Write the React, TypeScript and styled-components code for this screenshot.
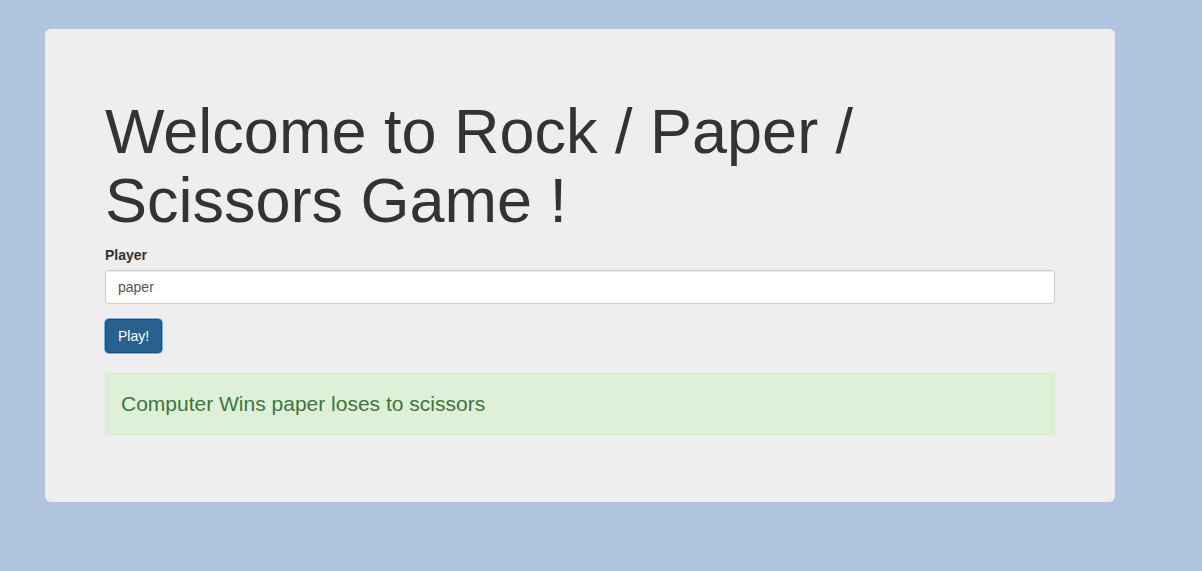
import React from "react";
import styled, { createGlobalStyle } from "styled-components";

const GlobalStyle = createGlobalStyle`
  html, body {
    margin: 0;
    padding: 0;
    background: #b0c4de;
    font-family: "Liberation Sans", Arial, Helvetica, sans-serif;
    font-size: 14px;
    line-height: 1.42857143;
    color: #333;
  }
  * { box-sizing: border-box; }
`;

const Page = styled.div`
  padding: 29px 0 0 45px;
`;

const Jumbotron = styled.div`
  width: 1070px;
  background: #eeeeee;
  border-radius: 6px;
  padding: 48px 60px;
  display: flex;
  flex-direction: column;
`;

const Title = styled.h1`
  margin: 20px 0 9px;
  font-size: 63px;
  line-height: 1.1;
  font-weight: 500;
  color: #333;
`;

const Label = styled.label`
  font-weight: bold;
  font-size: 14px;
  line-height: 20px;
  margin-bottom: 5px;
  color: #333;
`;

const Input = styled.input`
  display: block;
  width: 100%;
  height: 34px;
  padding: 6px 12px;
  font-family: inherit;
  font-size: 14px;
  color: #555;
  background: #fff;
  border: 1px solid #ccc;
  border-radius: 4px;
  box-shadow: inset 0 1px 1px rgba(0, 0, 0, 0.075);
  margin-bottom: 15px;
  outline: none;
`;

const Button = styled.button`
  align-self: flex-start;
  height: 34px;
  padding: 6px 12px;
  font-family: inherit;
  font-size: 14px;
  line-height: 20px;
  color: #fff;
  background: #286090;
  border: 1px solid #204d74;
  border-radius: 4px;
  box-shadow: 0 0 0 1px #7fb0e8;
  margin-bottom: 20px;
  cursor: pointer;
`;

const Alert = styled.p`
  margin: 0 0 19px;
  padding: 15px;
  border: 1px solid #d6e9c6;
  border-radius: 4px;
  background: #dff0d8;
  color: #3c763d;
  font-size: 21px;
  line-height: 30px;
  font-weight: 200;
`;

export default function App() {
  return (
    <>
      <GlobalStyle />
      <Page>
        <Jumbotron>
          <Title>Welcome to Rock / Paper / Scissors Game !</Title>
          <Label>Player</Label>
          <Input defaultValue="paper" />
          <Button>Play!</Button>
          <Alert>Computer Wins paper loses to scissors</Alert>
        </Jumbotron>
      </Page>
    </>
  );
}
